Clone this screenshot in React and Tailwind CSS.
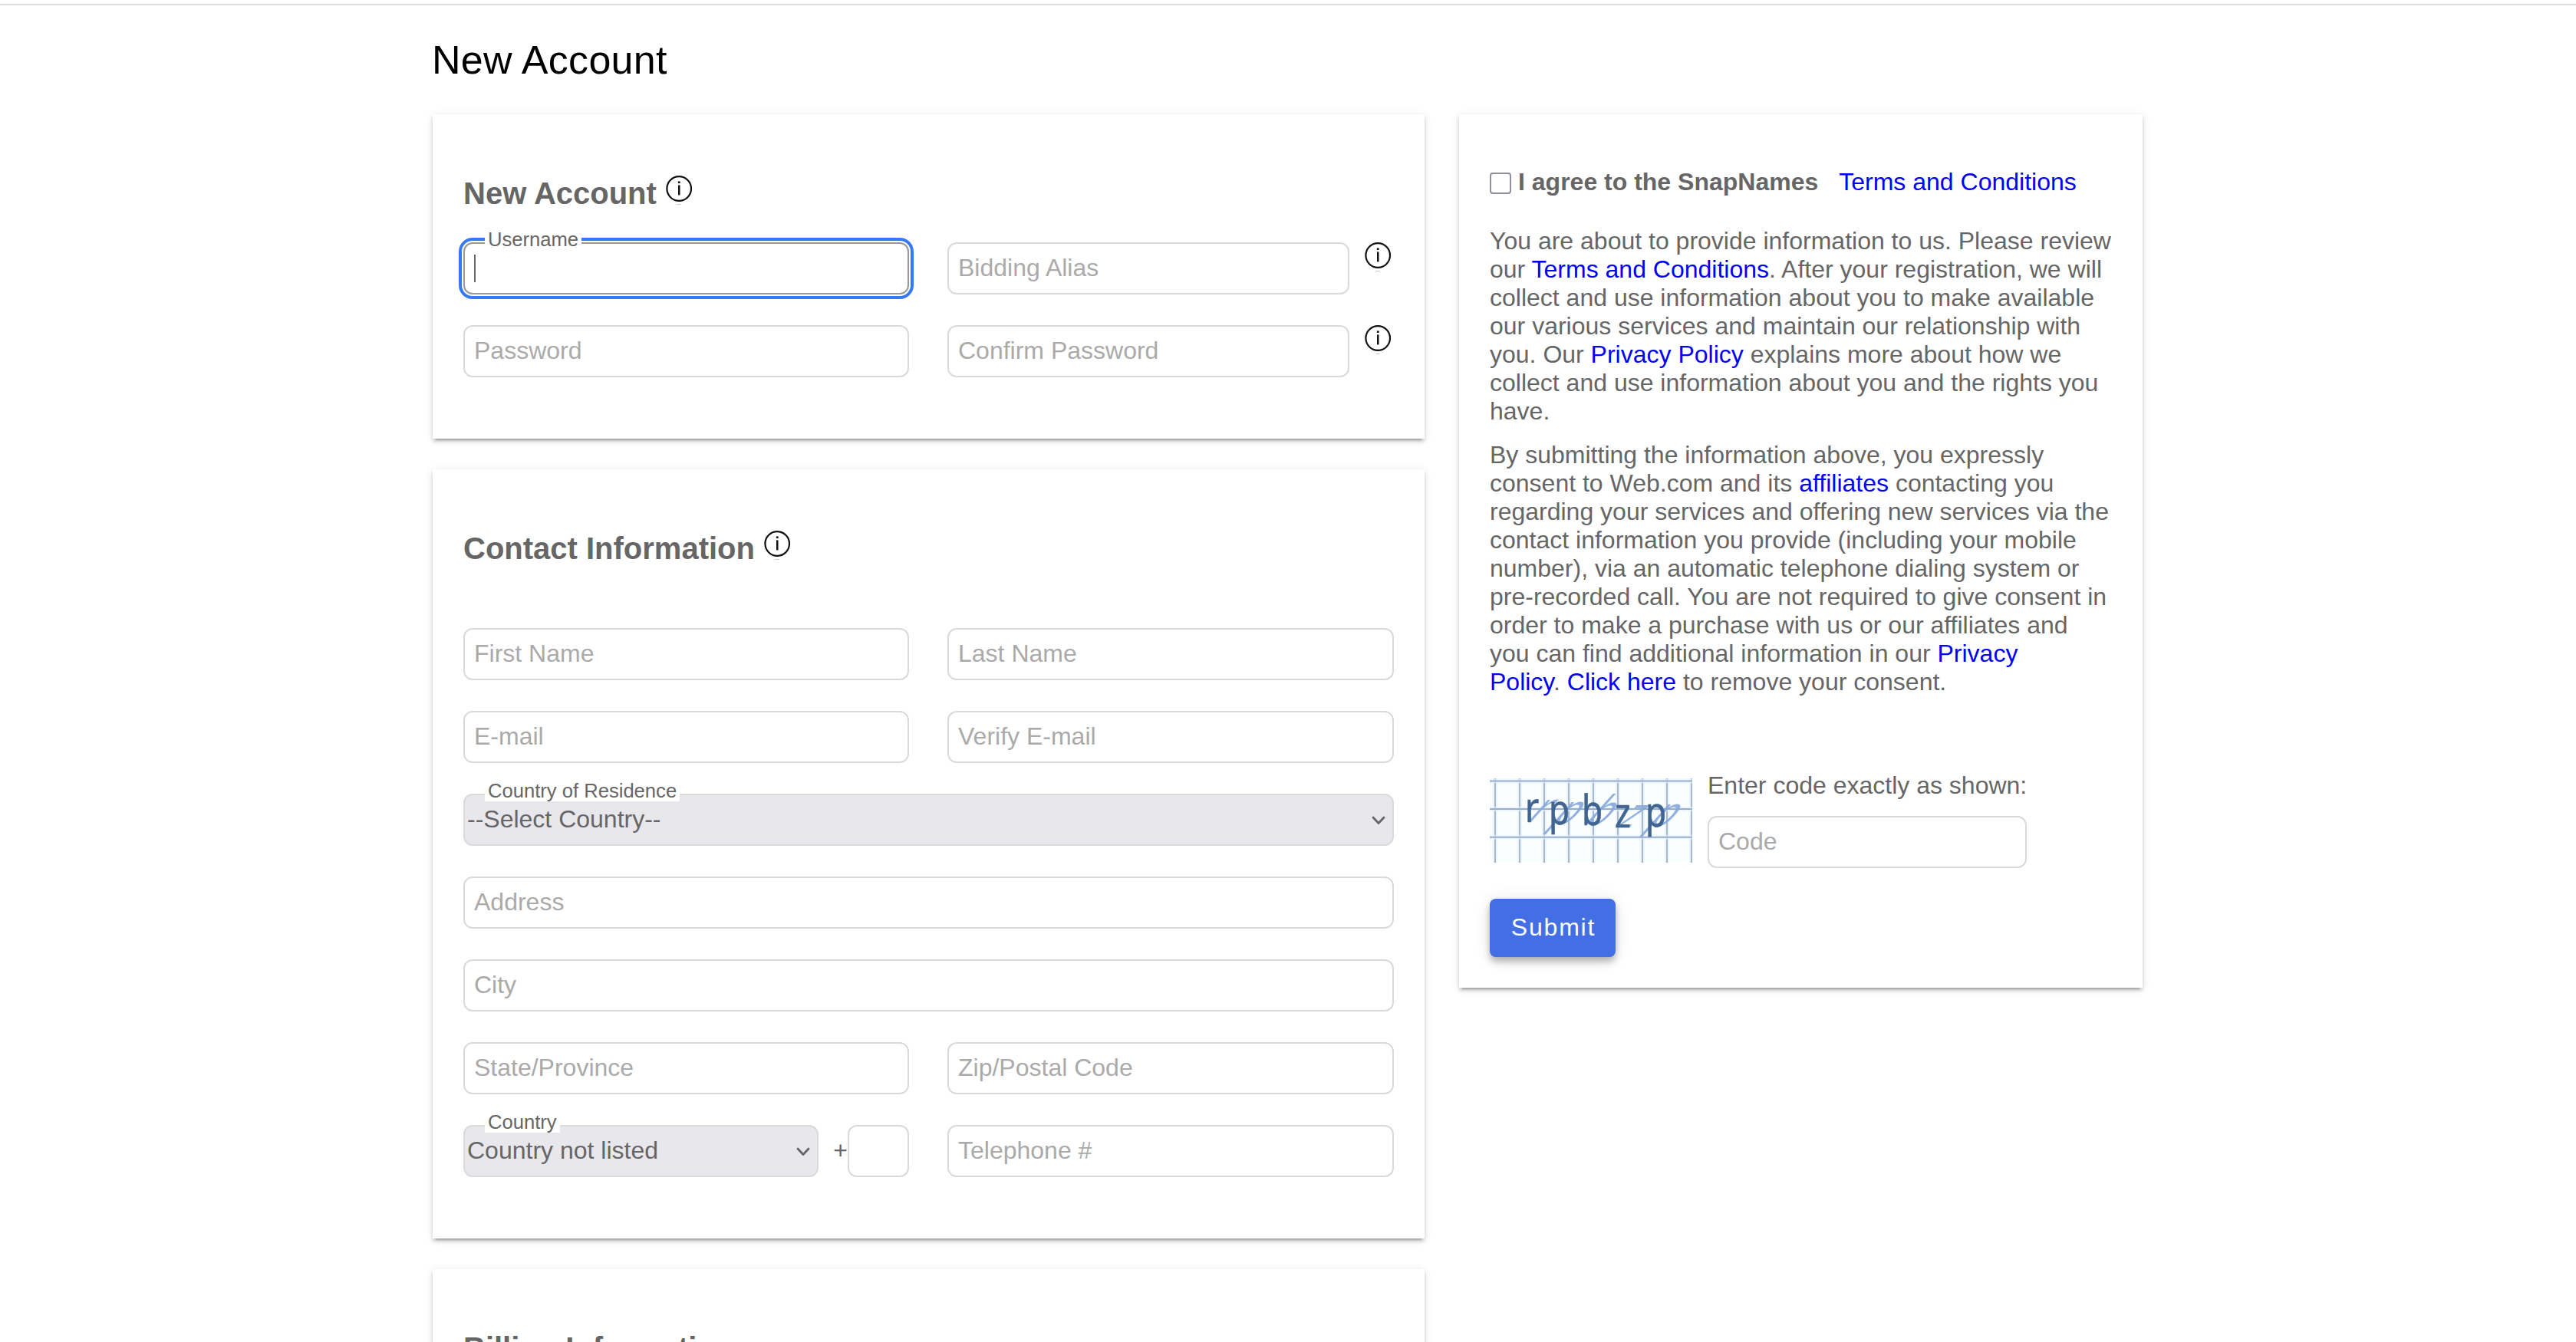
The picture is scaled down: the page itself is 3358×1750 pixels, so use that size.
import React from "react";

function InfoIcon({ className = "" }) {
  return (
    <svg viewBox="0 0 35 38" className={`h-[38px] w-[35px] shrink-0 ${className}`} fill="none">
      <circle cx="17.2" cy="17" r="15.8" stroke="#111" strokeWidth="2.2" />
      <rect x="16" y="12.4" width="2.5" height="13" fill="#111" />
      <rect x="15.9" y="7.4" width="2.7" height="2.6" fill="#111" />
      <rect x="14" y="37" width="6" height="1" fill="#ccc" />
    </svg>
  );
}

function Card({ className = "", children }) {
  return (
    <section
      className={`bg-white px-10 shadow-[0_6px_2px_-4px_rgba(0,0,0,0.2),0_4px_4px_0_rgba(0,0,0,0.14),0_2px_10px_0_rgba(0,0,0,0.12)] ${className}`}
    >
      {children}
    </section>
  );
}

function SectionTitle({ icon = true, children }) {
  return (
    <h2 className="flex items-start gap-[12px] text-[40px] leading-[46px] font-bold">
      {children}
      {icon && <InfoIcon />}
    </h2>
  );
}

function Field({ label = "", className = "", type = "text" }) {
  return (
    <input
      type={type}
      placeholder={label}
      aria-label={label || "Dialing code"}
      className={`block h-[68px] min-w-0 rounded-[12px] border-2 border-[#dadada] bg-white pb-[2px] pl-[12px] text-[32px] placeholder:text-[#aaa] ${className}`}
    />
  );
}

function FloatingLabel({ className, children }) {
  return (
    <span className={`absolute bg-white px-1 text-[25.6px] leading-[28px] whitespace-nowrap ${className}`}>
      {children}
    </span>
  );
}

function SelectBox({ label, value, className = "" }) {
  return (
    <div
      className={`relative flex h-[68px] items-center justify-between rounded-[12px] border-2 border-[#dadada] bg-[#e8e7ec] pr-[9px] pl-[3px] ${className}`}
    >
      <FloatingLabel className="-top-[20px] left-[26px]">{label}</FloatingLabel>
      <span className="pb-[1px] text-[32px] leading-[37px]">{value}</span>
      <svg viewBox="0 0 18 12" className="mt-[2px] h-[12px] w-[18px]" fill="none">
        <path d="M2 2l7 7.5L16 2" stroke="#666" strokeWidth="2.8" strokeLinecap="round" strokeLinejoin="round" />
      </svg>
    </div>
  );
}

function Link({ children }) {
  return <a className="text-[#0000f5]">{children}</a>;
}

const LETTERS = [
  { ch: "r", x: 46, y: 57 },
  { ch: "p", x: 77, y: 60 },
  { ch: "b", x: 120, y: 61 },
  { ch: "z", x: 163, y: 64 },
  { ch: "p", x: 203, y: 63 },
];

function Captcha() {
  return (
    <svg viewBox="0 0 264 110" className="mt-[9px] h-[110px] w-[264px] shrink-0" fontFamily='"Noto Sans", sans-serif'>
      <rect width="264" height="110" fill="#fbfeff" />
      {[7, 39, 71, 103, 135, 167, 199, 231, 263].map((x) => (
        <g key={x}>
          <path d={`M${x} 0V110`} stroke="#eaf5ff" strokeWidth="6" />
          <path d={`M${x} 0V110`} stroke="#a8b7cc" strokeWidth="2" />
        </g>
      ))}
      {[3.5, 40, 76.7].map((y) => (
        <g key={y}>
          <path d={`M0 ${y}H264`} stroke="#e4f2ff" strokeWidth="6" opacity=".6" />
          <path d={`M0 ${y}H264`} stroke="#98aecb" strokeWidth="2" />
        </g>
      ))}
      {LETTERS.map(({ ch, x, y }) => (
        <text
          key={`s${x}`}
          fontSize="54"
          fill="#86a8dc"
          opacity=".9"
          transform={`translate(${x} ${y}) skewX(-42) scale(.82 1)`}
        >
          {ch}
        </text>
      ))}
      {LETTERS.map(({ ch, x, y }) => (
        <text
          key={`t${x}`}
          fontSize="54"
          fill="#416590"
          stroke="#416590"
          strokeWidth=".6"
          transform={`translate(${x} ${y}) scale(.82 1)`}
        >
          {ch}
        </text>
      ))}
    </svg>
  );
}

export default function App() {
  return (
    <div className="h-[1750px] overflow-hidden bg-white pt-[5px] font-['Liberation_Sans',Arial,sans-serif] text-[#666]">
      <div className="h-[2px] bg-[#dcdcdc]" />
      <main className="pl-[564px]">
        <h1 className="mt-[41px] -ml-px text-[52px] leading-[60px] tracking-[0.3px] text-black">New Account</h1>
        <div className="mt-[41px] flex items-start gap-[45px]">
          <div className="flex w-[1293px] flex-col gap-10">
            <Card className="pt-[80px] pb-[80px]">
              <SectionTitle>New Account</SectionTitle>
              <div className="mt-[41px] grid grid-cols-[581px_582px] gap-x-[50px] gap-y-10">
                <div className="relative">
                  <div className="flex h-[68px] items-center rounded-[12px] border-2 border-[#999] pl-[12px] outline-4 outline-offset-2 outline-[#3579f7]">
                    <span className="h-[36px] w-[2px] bg-[#666]" />
                  </div>
                  <FloatingLabel className="-top-[18px] left-[28px]">Username</FloatingLabel>
                </div>
                <div className="flex">
                  <Field label="Bidding Alias" className="w-[524px]" />
                  <InfoIcon className="ml-[20px]" />
                </div>
                <Field label="Password" type="password" className="w-full" />
                <div className="flex">
                  <Field label="Confirm Password" type="password" className="w-[524px]" />
                  <InfoIcon className="ml-[20px]" />
                </div>
              </div>
            </Card>

            <Card className="pt-[80px] pb-[80px]">
              <SectionTitle>Contact Information</SectionTitle>
              <div className="mt-[81px] grid grid-cols-[581px_582px] gap-x-[50px] gap-y-10">
                <Field label="First Name" />
                <Field label="Last Name" />
                <Field label="E-mail" />
                <Field label="Verify E-mail" />
                <SelectBox label="Country of Residence" value="--Select Country--" className="col-span-2" />
                <Field label="Address" className="col-span-2" />
                <Field label="City" className="col-span-2" />
                <Field label="State/Province" />
                <Field label="Zip/Postal Code" />
                <div className="flex items-center">
                  <SelectBox label="Country" value="Country not listed" className="w-[463px]" />
                  <span className="ml-auto pb-[1px] text-[32px] leading-[37px]">+</span>
                  <Field className="w-[80px]" />
                </div>
                <Field label="Telephone #" />
              </div>
            </Card>

            <Card className="h-[300px] pt-[80px]">
              <SectionTitle icon={false}>Billing Information</SectionTitle>
            </Card>
          </div>

          <Card className="w-[891px] pt-[70px] pb-10 text-[32px] leading-[37px]">
            <div className="flex">
              <input
                type="checkbox"
                aria-label="I agree"
                className="mt-[6px] mr-[9px] h-[28px] w-[28px] appearance-none rounded-[4px] border-2 border-[#8f8f9d] bg-white"
              />
              <span className="mr-[27px] font-bold">I agree to the SnapNames</span>
              <Link>Terms and Conditions</Link>
            </div>
            <p className="mt-[40px]">
              You are about to provide information to us. Please review our <Link>Terms and Conditions</Link>. After
              your registration, we will collect and use information about you to make available our various services
              and maintain our relationship with you. Our <Link>Privacy Policy</Link> explains more about how we
              collect and use information about you and the rights you have.
            </p>
            <p className="mt-[20px]">
              By submitting the information above, you expressly consent to Web.com and its <Link>affiliates</Link>{" "}
              contacting you regarding your services and offering new services via the contact information you provide
              (including your mobile number), via an automatic telephone dialing system or pre-recorded call. You are
              not required to give consent in order to make a purchase with us or our affiliates and you can find
              additional information in our <Link>Privacy Policy</Link>.{"\u00a0"}
              <Link>Click here</Link> to remove your consent.
            </p>
            <div className="mt-[98px] flex">
              <Captcha />
              <div className="ml-[20px]">
                <div>Enter code exactly as shown:</div>
                <Field label="Code" className="mt-[21px] w-[416px]" />
              </div>
            </div>
            <button className="mt-10 flex h-[76px] w-[164px] items-center justify-center rounded-[8px] bg-[#436ee4] pb-[1px] pl-[2px] tracking-[1.8px] text-white shadow-[0_4px_8px_-2px_rgba(0,0,0,0.2),0_8px_10px_0_rgba(0,0,0,0.14),0_2px_20px_0_rgba(0,0,0,0.12)]">
              Submit
            </button>
          </Card>
        </div>
      </main>
    </div>
  );
}
